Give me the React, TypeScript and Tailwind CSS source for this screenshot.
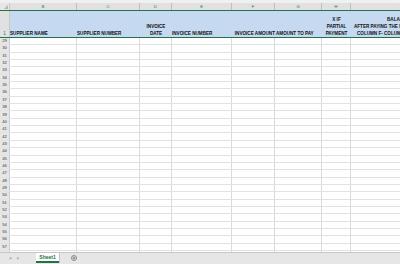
import React from "react";

const cols = [
  { l: "B", w: 67 },
  { l: "C", w: 63 },
  { l: "D", w: 32 },
  { l: "E", w: 60 },
  { l: "F", w: 43 },
  { l: "G", w: 47 },
  { l: "H", w: 29 },
  { l: "I", w: 100 },
];

const rows = Array.from({ length: 30 }, (_, i) => 29 + i);

export default function App() {
  return (
    <div
      className="w-[400px] h-[264px] overflow-hidden bg-white flex flex-col"
      style={{ fontFamily: '"Liberation Sans", Arial, sans-serif' }}
    >
      {/* top strip */}
      <div className="h-[3px] bg-[#f0f0f0] shrink-0" />
      {/* column headers */}
      <div className="flex h-[8px] shrink-0 bg-[#e1e1e1] border-b border-[#217346]">
        <div className="w-[10px] shrink-0 relative border-r border-[#c8c8c8] bg-[#e6e6e6]">
          <div className="absolute right-[1px] bottom-[1px] w-0 h-0 border-l-[4px] border-l-transparent border-b-[4px] border-b-[#b5b5b5]" />
        </div>
        {cols.map((c) => (
          <div
            key={c.l}
            className="shrink-0 border-r border-[#bfbfbf] flex items-center justify-center text-[4px] leading-none text-[#217346]"
            style={{ width: c.w }}
          >
            {c.l}
          </div>
        ))}
      </div>
      {/* header row 1 */}
      <div className="flex h-[27px] shrink-0 border-b border-[#217346]">
        <div className="w-[10px] shrink-0 bg-[#e1e1e1] border-r border-[#c8c8c8] flex items-end justify-center text-[4.5px] leading-[7px] text-[#217346]">
          1
        </div>
        <div className="flex-1 flex bg-[#c5d9f1] text-[4.6px] leading-[7px] font-bold text-[#111] whitespace-nowrap overflow-hidden">
          <div className="w-[67px] shrink-0 flex items-end">SUPPLIER NAME</div>
          <div className="w-[63px] shrink-0 flex items-end">SUPPLIER NUMBER</div>
          <div className="w-[32px] shrink-0 flex flex-col justify-end items-center text-center">
            <span>INVOICE</span>
            <span>DATE</span>
          </div>
          <div className="w-[60px] shrink-0 flex items-end">INVOICE NUMBER</div>
          <div className="w-[43px] shrink-0 flex items-end justify-end">INVOICE AMOUNT</div>
          <div className="w-[47px] shrink-0 flex items-end pl-[1px]">AMOUNT TO PAY</div>
          <div className="w-[29px] shrink-0 flex flex-col justify-end items-center">
            <span>X IF</span>
            <span>PARTIAL</span>
            <span>PAYMENT</span>
          </div>
          <div className="w-[100px] shrink-0 flex flex-col justify-end items-start">
            <span className="ml-[36px]">BALANCE</span>
            <span className="ml-[3px]">AFTER PAYING THE PARTIAL AMOUNT</span>
            <span className="ml-[6px]">COLUMN F- COLUMN G</span>
          </div>
        </div>
      </div>
      {/* data rows */}
      <div className="flex-1 overflow-hidden">
        {rows.map((r) => (
          <div key={r} className="flex h-[7.35px] border-b border-[#e2e2e2] box-border">
            <div className="w-[10px] shrink-0 bg-[#e6e6e6] border-r border-[#c8c8c8] flex items-center justify-center text-[4.2px] leading-none text-[#333]">
              {r}
            </div>
            {cols.map((c) => (
              <div
                key={c.l}
                className="shrink-0 border-r border-[#dadada]"
                style={{ width: c.w }}
              />
            ))}
          </div>
        ))}
      </div>
      {/* tab bar */}
      <div className="h-[12px] shrink-0 bg-[#e6e6e6] border-t border-[#c6c6c6] flex items-start">
        <div className="w-[36px] shrink-0 flex items-center gap-[6px] pl-[9px] h-[10px] text-[3px] text-[#a6a6a6]">
          <span>◀</span>
          <span>▶</span>
        </div>
        <div className="w-[23px] h-[10px] shrink-0 bg-white border-b-[2px] border-[#217346] flex items-center justify-center text-[5px] leading-none font-bold text-[#217346] shadow-[1px_0_0_#c6c6c6]">
          Sheet1
        </div>
        <div className="ml-[12px] mt-[2px] w-[6px] h-[6px] rounded-full border border-[#8a8a8a] flex items-center justify-center">
          <svg width="4" height="4" viewBox="0 0 4 4">
            <path d="M2 0.5V3.5M0.5 2H3.5" stroke="#6a6a6a" strokeWidth="0.7" />
          </svg>
        </div>
      </div>
    </div>
  );
}
